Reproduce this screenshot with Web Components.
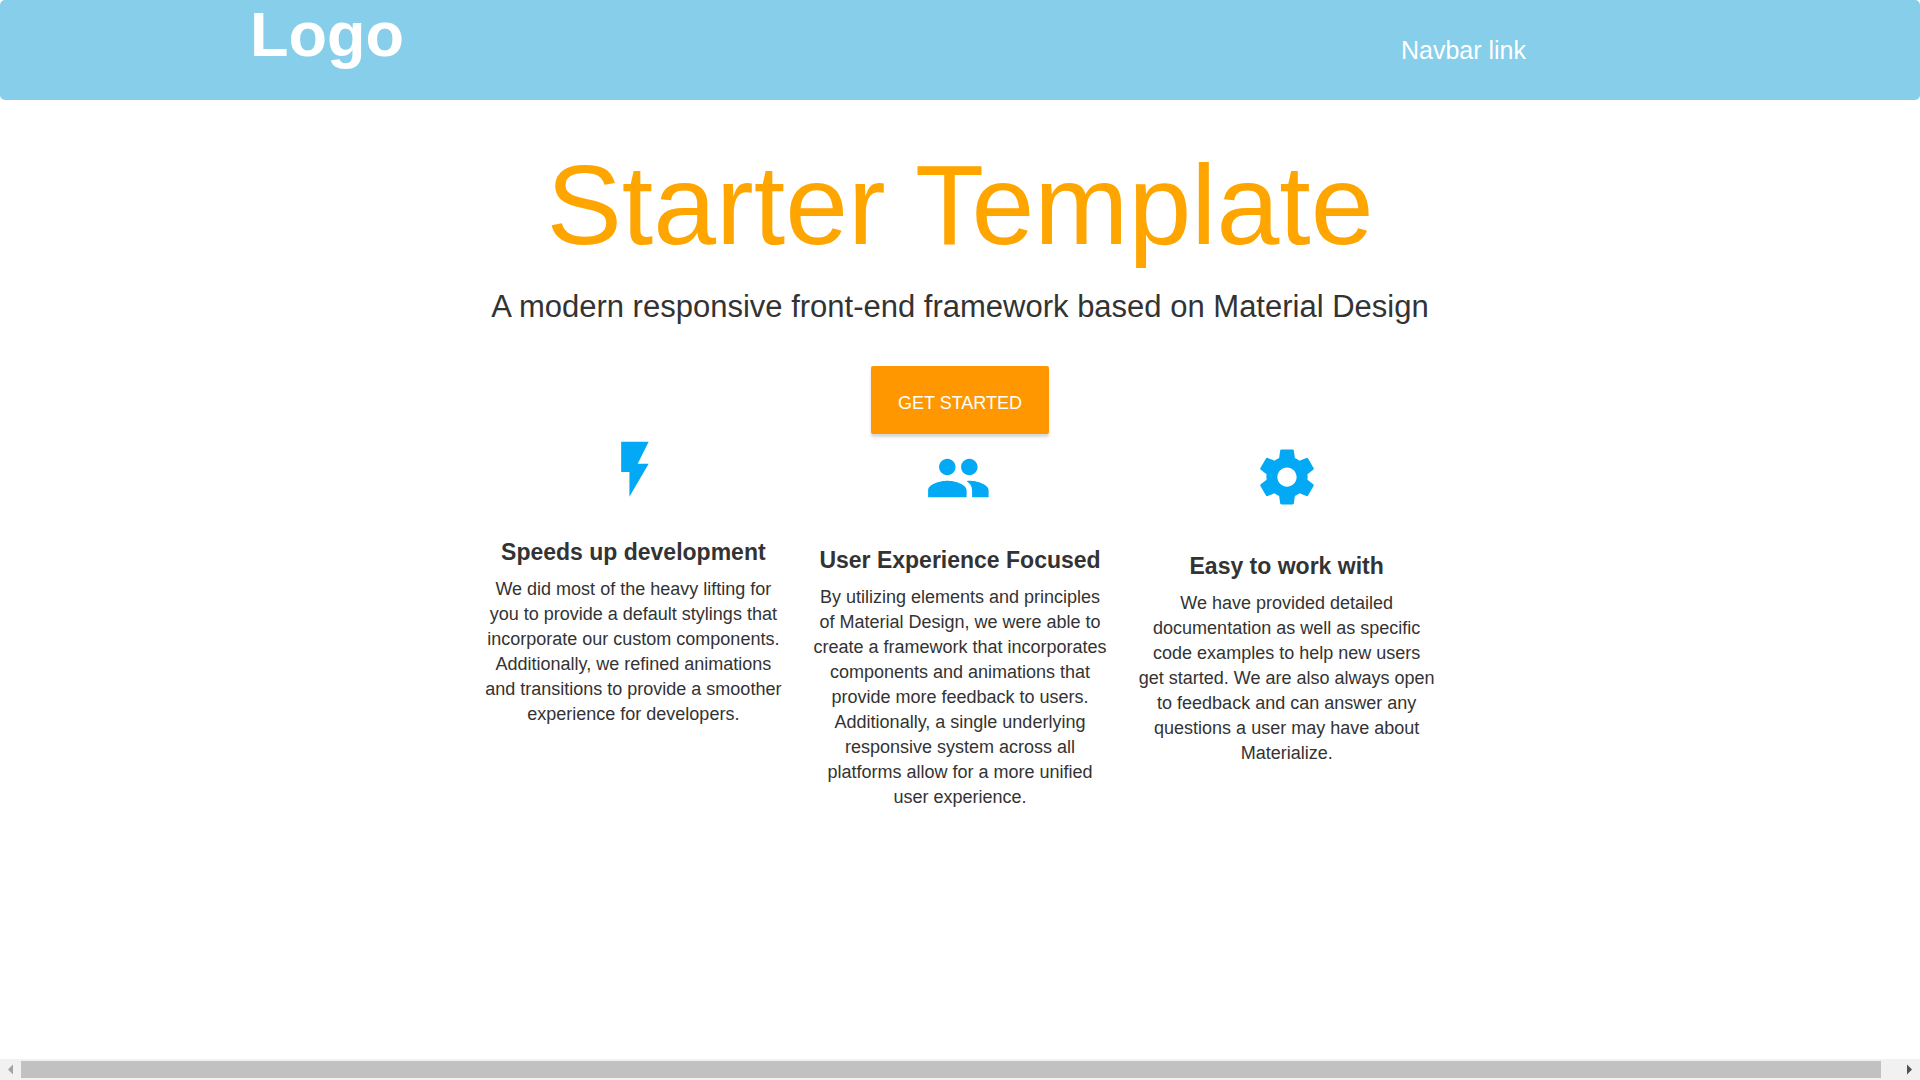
<!DOCTYPE html>
<html lang="en">
<head>
<meta charset="utf-8">
<meta name="viewport" content="width=device-width, initial-scale=1">
<title>Starter Template</title>
<style>
  body { margin: 0; background: #fff; color: #333; font-family: "Liberation Sans", Arial, sans-serif; font-size: 18px; line-height: 25px; }
</style>
</head>
<body>
<app-page>
  <nav-bar slot="header" brand="Logo"><a href="#">Navbar link</a></nav-bar>
  <hero-banner heading="Starter Template" action="Get Started">A modern responsive front-end framework based on Material Design</hero-banner>
  <feature-row>
    <feature-card icon="flash" heading="Speeds up development">We did most of the heavy lifting for you to provide a default stylings that incorporate our custom components. Additionally, we refined animations and transitions to provide a smoother experience for developers.</feature-card>
    <feature-card icon="group" heading="User Experience Focused">By utilizing elements and principles of Material Design, we were able to create a framework that incorporates components and animations that provide more feedback to users. Additionally, a single underlying responsive system across all platforms allow for a more unified user experience.</feature-card>
    <feature-card icon="settings" heading="Easy to work with">We have provided detailed documentation as well as specific code examples to help new users get started. We are also always open to feedback and can answer any questions a user may have about Materialize.</feature-card>
  </feature-row>
  <scroll-strip slot="footer"></scroll-strip>
</app-page>

<script>
class BaseElement extends HTMLElement {
  constructor() {
    super();
    this.attachShadow({ mode: 'open' });
  }
  connectedCallback() {
    this.shadowRoot.innerHTML = this.render();
  }
}

customElements.define('app-page', class extends BaseElement {
  render() {
    return `<style>
      :host { display: flex; flex-direction: column; min-height: 100vh; }
      main { flex: 1; }
    </style>
    <slot name="header"></slot><main><slot></slot></main><slot name="footer"></slot>`;
  }
});

customElements.define('nav-bar', class extends BaseElement {
  render() {
    return `<style>
      :host { display: block; background: #87ceeb; border-radius: 5px; }
      nav { display: flex; justify-content: space-between; box-sizing: border-box; max-width: 1420px; min-height: 100px; margin: 0 auto; }
      .brand { color: #fff; font-size: 63px; font-weight: 700; line-height: 68px; text-decoration: none; }
      .links { display: flex; padding: 38px 144px 0 0; font-size: 25px; line-height: 25px; }
      ::slotted(a) { color: #fff; text-decoration: none; }
    </style>
    <nav><a class="brand" href="#">${this.getAttribute('brand')}</a><div class="links"><slot></slot></div></nav>`;
  }
});

customElements.define('hero-banner', class extends BaseElement {
  render() {
    return `<style>
      :host { display: flex; flex-direction: column; align-items: center; padding-top: 43px; text-align: center; }
      h1 { margin: 0; color: #ffa500; font-size: 113px; font-weight: 400; line-height: 124px; }
      p { margin: 18px 0 37px; font-size: 31px; line-height: 44px; }
      button { padding: 6px 27px 0; height: 68px; border: 0; border-radius: 2px; background: #ff9800; color: #fff; font: inherit; text-transform: uppercase; cursor: pointer; box-shadow: 0 3px 3px rgba(0, 0, 0, .16); }
    </style>
    <h1>${this.getAttribute('heading')}</h1>
    <p><slot></slot></p>
    <button type="button">${this.getAttribute('action')}</button>`;
  }
});

customElements.define('feature-row', class extends BaseElement {
  render() {
    return `<style>
      :host { display: grid; grid-template-columns: repeat(3, minmax(0, 1fr)); gap: 30px; max-width: 950px; margin: 0 auto; }
    </style><slot></slot>`;
  }
});

const ICONS = {
  flash: '<svg viewBox="-0.7 0.3 24 24"><path d="M7 2v11h3v9l7-12h-4l4-8z"/></svg>',
  group: '<svg viewBox="0.6 -0.4 24 24"><path d="M16 11c1.66 0 2.99-1.34 2.99-3S17.66 5 16 5c-1.66 0-3 1.34-3 3s1.34 3 3 3zm-8 0c1.66 0 2.99-1.34 2.99-3S9.66 5 8 5C6.34 5 5 6.34 5 8s1.34 3 3 3zm0 2c-2.33 0-7 1.17-7 3.5V19h14v-2.5c0-2.33-4.67-3.5-7-3.5zm8 0c-.29 0-.62.02-.97.05 1.16.84 1.97 1.97 1.97 3.45V19h6v-2.5c0-2.33-4.67-3.5-7-3.5z"/></svg>',
  settings: '<svg viewBox="0 0 24 24"><path d="M19.43 12.98c.04-.32.07-.64.07-.98s-.03-.66-.07-.98l2.11-1.65c.19-.15.24-.42.12-.64l-2-3.46c-.12-.22-.39-.3-.61-.22l-2.49 1c-.52-.4-1.08-.73-1.69-.98l-.38-2.65C14.46 2.18 14.25 2 14 2h-4c-.25 0-.46.18-.49.42l-.38 2.65c-.61.25-1.17.59-1.69.98l-2.49-1c-.23-.09-.49 0-.61.22l-2 3.46c-.13.22-.07.49.12.64l2.11 1.65c-.04.32-.07.65-.07.98s.03.66.07.98l-2.11 1.65c-.19.15-.24.42-.12.64l2 3.46c.12.22.39.3.61.22l2.49-1c.52.4 1.08.73 1.69.98l.38 2.65c.03.24.24.42.49.42h4c.25 0 .46-.18.49-.42l.38-2.65c.61-.25 1.17-.59 1.69-.98l2.49 1c.23.09.49 0 .61-.22l2-3.46c.12-.22.07-.49-.12-.64l-2.11-1.65zM12 15.5c-1.93 0-3.5-1.57-3.5-3.5s1.57-3.5 3.5-3.5 3.5 1.57 3.5 3.5-1.57 3.5-3.5 3.5z"/></svg>'
};

customElements.define('feature-card', class extends BaseElement {
  render() {
    return `<style>
      :host { display: block; padding-top: 3px; text-align: center; }
      :host([icon="group"]), :host([icon="settings"]) { padding-top: 10px; }
      .icon { display: flex; justify-content: center; height: 103px; }
      :host([icon="group"]) .icon { height: 104px; }
      :host([icon="settings"]) .icon { height: 110px; }
      svg { width: 66px; height: 66px; fill: #03a9f4; }
      h2 { margin: 0 0 12px; font-size: 23px; font-weight: 700; line-height: 25px; }
      p { margin: 0; }
    </style>
    <div class="icon" aria-hidden="true">${ICONS[this.getAttribute('icon')]}</div>
    <h2>${this.getAttribute('heading')}</h2>
    <p><slot></slot></p>`;
  }
});

customElements.define('scroll-strip', class extends BaseElement {
  render() {
    return `<style>
      :host { display: flex; align-items: center; height: 21px; background: #f1f1f1; }
      svg { flex: none; width: 21px; height: 21px; }
      svg:last-child { margin-left: 18px; }
      .thumb { flex: 1; height: 17px; background: #c1c1c1; }
    </style>
    <svg viewBox="0 0 21 21"><path d="M13 5.500v10L8 10.500z" fill="#a3a3a3"/></svg>
    <div class="thumb"></div>
    <svg viewBox="0 0 21 21"><path d="M8 5.500v10l5-5z" fill="#505050"/></svg>`;
  }
});
</script>
</body>
</html>
